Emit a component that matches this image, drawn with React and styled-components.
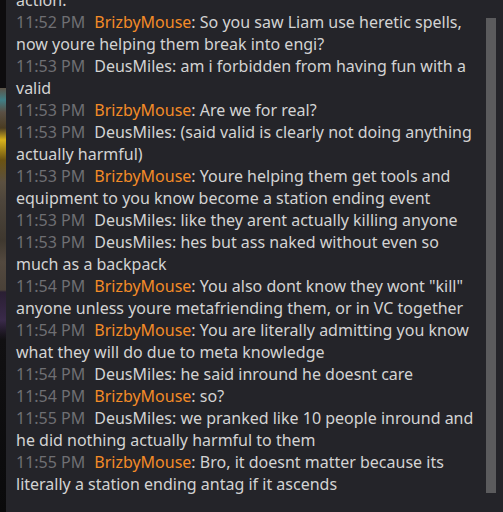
import React from "react";
import styled, { createGlobalStyle } from "styled-components";

const Global = createGlobalStyle`
  html, body { margin: 0; padding: 0; background: #0c0b0d; }
  body { width: 503px; height: 512px; overflow: hidden; }
`;

const Screen = styled.div`
  display: flex;
  width: 503px;
  height: 512px;
  overflow: hidden;
`;

const World = styled.div`
  width: 6px;
  flex: none;
  background: linear-gradient(
    to bottom,
    #0d0c0e 0px, #0d0c0e 88px,
    #5d5347 88px, #3f7f86 100px, #5a5045 112px,
    #4a3c22 128px, #d8b21c 140px, #6b5312 160px, #5b5040 182px,
    #4e463c 200px, #3f382f 240px, #53493f 262px, #4a4138 290px,
    #2a1f33 292px, #3a2a4a 320px, #1b1620 334px,
    #111012 340px, #0a0a0b 512px
  );
`;

const Panel = styled.div`
  flex: 1;
  display: flex;
  background: #242429;
  overflow: hidden;
`;

const Log = styled.div`
  flex: 1;
  padding: 0 2px 0 10px;
  margin-top: -11px;
  font-family: "Noto Sans", "DejaVu Sans", sans-serif;
  font-size: 16px;
  line-height: 22px;
  color: #d3d3d3;
`;

const Line = styled.div``;

const Time = styled.span`
  color: #6f6f73;
  margin-right: 9px;
`;

const Name = styled.span`
  color: ${(p) => (p.$orange ? "#f38b27" : "#d3d3d3")};
`;

const Track = styled.div`
  width: 10px;
  flex: none;
  margin-right: 7px;
  padding-top: 18px;
`;

const Thumb = styled.div`
  height: 475px;
  background: #5b5b5d;
`;

const messages = [
  { t: null, text: "action." },
  { t: "11:52 PM", n: "BrizbyMouse", o: true, text: "So you saw Liam use heretic spells, now youre helping them break into engi?" },
  { t: "11:53 PM", n: "DeusMiles", text: "am i forbidden from having fun with a valid" },
  { t: "11:53 PM", n: "BrizbyMouse", o: true, text: "Are we for real?" },
  { t: "11:53 PM", n: "DeusMiles", text: "(said valid is clearly not doing anything actually harmful)" },
  { t: "11:53 PM", n: "BrizbyMouse", o: true, text: "Youre helping them get tools and equipment to you know become a station ending event" },
  { t: "11:53 PM", n: "DeusMiles", text: "like they arent actually killing anyone" },
  { t: "11:53 PM", n: "DeusMiles", text: "hes but ass naked without even so much as a backpack" },
  { t: "11:54 PM", n: "BrizbyMouse", o: true, text: "You also dont know they wont \"kill\" anyone unless youre metafriending them, or in VC together" },
  { t: "11:54 PM", n: "BrizbyMouse", o: true, text: "You are literally admitting you know what they will do due to meta knowledge" },
  { t: "11:54 PM", n: "DeusMiles", text: "he said inround he doesnt care" },
  { t: "11:54 PM", n: "BrizbyMouse", o: true, text: "so?" },
  { t: "11:55 PM", n: "DeusMiles", text: "we pranked like 10 people inround and he did nothing actually harmful to them" },
  { t: "11:55 PM", n: "BrizbyMouse", o: true, text: "Bro, it doesnt matter because its literally a station ending antag if it ascends" },
];

export default function App() {
  return (
    <Screen>
      <Global />
      <World />
      <Panel>
        <Log>
          {messages.map((m, i) => (
            <Line key={i}>
              {m.t && <Time>{m.t}</Time>}
              {m.n && <Name $orange={m.o}>{m.n}</Name>}
              {m.n ? ": " : ""}
              {m.text}
            </Line>
          ))}
        </Log>
        <Track>
          <Thumb />
        </Track>
      </Panel>
    </Screen>
  );
}
